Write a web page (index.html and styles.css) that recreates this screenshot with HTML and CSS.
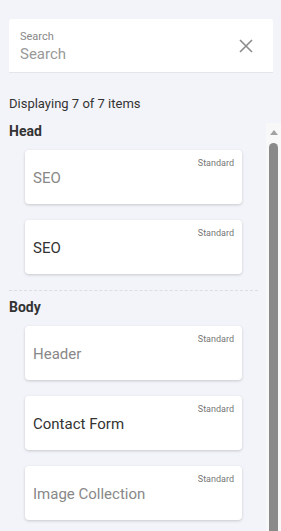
FILE: index.html
```html
<!DOCTYPE html>
<html lang="en">
<head>
    <meta charset="UTF-8">
    <meta name="viewport" content="width=device-width, initial-scale=1.0">
    <title>Components</title>
    <link rel="stylesheet" href="styles.css">
</head>
<body>
    <div class="panel">
        <div class="search">
            <div class="search-field">
                <label for="q">Search</label>
                <input type="text" id="q" placeholder="Search">
            </div>
            <button class="clear" type="button" aria-label="Clear">
                <svg width="14" height="14" viewBox="0 0 14 14">
                    <path d="M1 1 L13 13 M13 1 L1 13" stroke="#8c8c8c" stroke-width="1.6" fill="none"/>
                </svg>
            </button>
        </div>

        <div class="count">Displaying 7 of 7 items</div>

        <div class="list-wrap">
            <div class="list">
                <!-- Head -->
                <h2 class="group-title">Head</h2>
                <div class="card">
                    <span class="tag">Standard</span>
                    <span class="name muted">SEO</span>
                </div>
                <div class="card">
                    <span class="tag">Standard</span>
                    <span class="name">SEO</span>
                </div>

                <div class="divider"></div>

                <!-- Body -->
                <h2 class="group-title">Body</h2>
                <div class="card">
                    <span class="tag">Standard</span>
                    <span class="name muted">Header</span>
                </div>
                <div class="card">
                    <span class="tag">Standard</span>
                    <span class="name">Contact Form</span>
                </div>
                <div class="card">
                    <span class="tag">Standard</span>
                    <span class="name muted">Image Collection</span>
                </div>
            </div>
            <div class="scrollbar">
                <div class="arrow"></div>
                <div class="thumb"></div>
            </div>
        </div>
    </div>
</body>
</html>
```

FILE: styles.css
```css
html, body {
    margin: 0;
    height: 100%;
    overflow: hidden;
}
body {
    font-family: Roboto, "Liberation Sans", sans-serif;
    background-color: #f3f4f9;
    color: #333;
}
.panel {
    display: flex;
    flex-direction: column;
    height: 100%;
}
.search {
    display: flex;
    align-items: center;
    margin: 19px 8px 0 9px;
    height: 54px;
    background-color: #fff;
    border-bottom: 1px solid #e4e5ea;
    border-radius: 3px 3px 0 0;
    box-sizing: border-box;
    padding: 0 20px 0 11px;
}
.search-field {
    flex: 1;
    align-self: stretch;
    display: flex;
    flex-direction: column;
    padding-top: 11px;
}
.search-field label {
    font-size: 11px;
    line-height: 13px;
    color: #888;
}
.search-field input {
    border: none;
    outline: none;
    padding: 0;
    margin-top: 2px;
    font-family: inherit;
    font-size: 15px;
    line-height: 18px;
    color: #333;
    background: transparent;
}
.search-field input::placeholder {
    color: #999;
}
.clear {
    border: none;
    background: none;
    padding: 0;
    width: 14px;
    height: 14px;
    display: flex;
    cursor: pointer;
}
.count {
    margin: 23px 0 0 9px;
    font-size: 13px;
    line-height: 16px;
}
.list-wrap {
    flex: 1;
    display: flex;
    margin-top: 11px;
    min-height: 0;
}
.list {
    flex: 1;
    padding-left: 9px;
    padding-right: 8px;
}
.group-title {
    margin: 0;
    font-size: 14px;
    font-weight: bold;
    line-height: 16px;
}
.card {
    display: flex;
    flex-direction: column;
    margin: 11px 16px 16px 16px;
    height: 54px;
    box-sizing: border-box;
    padding: 8px 8px 0 8px;
    background-color: #fff;
    border-radius: 4px;
    box-shadow: 0 1px 3px rgba(0, 0, 0, 0.18);
}
.card + .card {
    margin-top: 0;
}
.tag {
    align-self: flex-end;
    font-size: 9px;
    line-height: 11px;
    color: #777;
}
.name {
    font-size: 15px;
    line-height: 18px;
    color: #333;
}
.name.muted {
    color: #888;
}
.divider {
    border-top: 1px dashed #dcdde3;
    margin: 0 0 8px 0;
}
.scrollbar {
    width: 15px;
    background-color: #f8f8f8;
    display: flex;
    flex-direction: column;
    align-items: center;
}
.arrow {
    margin-top: 7px;
    width: 0;
    height: 0;
    border-left: 4px solid transparent;
    border-right: 4px solid transparent;
    border-bottom: 5px solid #a3a3a3;
}
.thumb {
    margin-top: 8px;
    width: 9px;
    flex: 1;
    background-color: #8a8a8a;
    border-radius: 5px 5px 0 0;
}
```
